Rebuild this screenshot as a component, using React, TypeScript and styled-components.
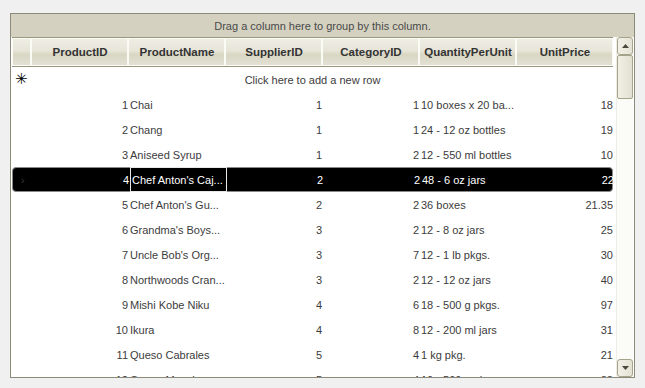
import * as React from 'react';
import styled, { createGlobalStyle } from 'styled-components';

const GlobalStyle = createGlobalStyle`
    html, body {
        margin: 0;
        padding: 0;
        background: #f0f0f0;
        font-family: 'Liberation Sans', Arial, sans-serif;
    }
`;

const COLS = '20px 97px 97px 97px 97px 97px 97px';

const Page = styled.div`
    padding: 13px 0 0 10px;
`;

const Grid = styled.div`
    width: 625px;
    height: 365px;
    box-sizing: border-box;
    border: 1px solid #8c8a78;
    background: #ffffff;
    display: flex;
    flex-direction: column;
`;

const GroupPanel = styled.div`
    height: 23px;
    flex: none;
    background: #d4d1c0;
    color: #4a4a4a;
    font-size: 11px;
    display: flex;
    align-items: center;
    justify-content: center;
`;

const Body = styled.div`
    flex: 1;
    display: flex;
    padding: 0 1px;
    gap: 3px;
    min-height: 0;
`;

const Table = styled.div`
    width: 602px;
    display: flex;
    flex-direction: column;
    overflow: hidden;
`;

const HeaderRow = styled.div`
    height: 30px;
    flex: none;
    box-sizing: border-box;
    display: grid;
    grid-template-columns: ${COLS};
    border-top: 1px solid #9a987e;
    border-bottom: 1px solid #9a987e;
    background: #9a987e;
`;

const HeaderCell = styled.div<{ first?: boolean }>`
    box-sizing: border-box;
    border: 1px solid #fbfbf6;
    border-left-width: ${(p) => (p.first ? '1px' : '0')};
    background: linear-gradient(#efeee5 0%, #e7e5d8 45%, #d9d6c4 60%, #e3e1d3 100%);
    color: #333333;
    font-weight: bold;
    font-size: 11.5px;
    display: flex;
    align-items: center;
    justify-content: center;
    box-shadow: inset -1px 0 0 #fbfbf6;
`;

const Rows = styled.div`
    display: flex;
    flex-direction: column;
`;

const Row = styled.div<{ selected?: boolean }>`
    height: 25px;
    flex: none;
    box-sizing: border-box;
    display: grid;
    grid-template-columns: ${COLS};
    align-items: stretch;
    font-size: 11px;
    color: ${(p) => (p.selected ? '#ffffff' : '#3c3c3c')};
    background: ${(p) => (p.selected ? '#000000' : 'transparent')};
    border: ${(p) => (p.selected ? '1px solid #8a8a8a' : '0')};
    border-radius: ${(p) => (p.selected ? '4px' : '0')};
`;

const NewRow = styled.div`
    height: 25px;
    flex: none;
    position: relative;
    display: flex;
    align-items: center;
    justify-content: center;
    font-size: 11px;
    color: #3c3c3c;
`;

const Star = styled.span`
    position: absolute;
    left: 3px;
    top: 5px;
    font-size: 15px;
    line-height: 15px;
    color: #000;
    font-family: 'DejaVu Sans', sans-serif;
`;

const Cell = styled.div<{ align?: 'left' | 'right'; focused?: boolean }>`
    box-sizing: border-box;
    display: flex;
    align-items: center;
    justify-content: ${(p) => (p.align === 'right' ? 'flex-end' : 'flex-start')};
    padding: 0 1px;
    white-space: nowrap;
    overflow: hidden;
    border: ${(p) => (p.focused ? '1px solid #e8e8e8' : '0')};
    margin-top: ${(p) => (p.focused ? '-1px' : '0')};
    margin-bottom: ${(p) => (p.focused ? '-1px' : '0')};
`;

const Indicator = styled.div`
    display: flex;
    align-items: center;
    padding-left: 8px;
    color: #3a3a3a;
    font-size: 11px;
`;

const ScrollBar = styled.div`
    width: 16px;
    flex: none;
    display: flex;
    flex-direction: column;
    background: #fbfbf8;
    border-left: 1px solid #eeeee6;
`;

const ScrollButton = styled.div`
    height: 18px;
    flex: none;
    box-sizing: border-box;
    border: 1px solid #a5a389;
    border-radius: 3px;
    background: linear-gradient(90deg, #f2f1e8, #e4e2d3);
    display: flex;
    align-items: center;
    justify-content: center;
`;

const Thumb = styled.div`
    height: 44px;
    flex: none;
    box-sizing: border-box;
    border: 1px solid #a5a389;
    border-radius: 2px;
    background: linear-gradient(90deg, #f1f0e6, #e2e0d0);
`;

const Track = styled.div`
    flex: 1;
`;

type Product = [number, string, number, number, string, string];

const data: Product[] = [
    [1, 'Chai', 1, 1, '10 boxes x 20 ba...', '18'],
    [2, 'Chang', 1, 1, '24 - 12 oz bottles', '19'],
    [3, 'Aniseed Syrup', 1, 2, '12 - 550 ml bottles', '10'],
    [4, "Chef Anton's Caj...", 2, 2, '48 - 6 oz jars', '22'],
    [5, "Chef Anton's Gu...", 2, 2, '36 boxes', '21.35'],
    [6, "Grandma's Boys...", 3, 2, '12 - 8 oz jars', '25'],
    [7, "Uncle Bob's Org...", 3, 7, '12 - 1 lb pkgs.', '30'],
    [8, 'Northwoods  Cran...', 3, 2, '12 - 12 oz jars', '40'],
    [9, 'Mishi Kobe Niku', 4, 6, '18 - 500 g pkgs.', '97'],
    [10, 'Ikura', 4, 8, '12 - 200 ml jars', '31'],
    [11, 'Queso Cabrales', 5, 4, '1 kg pkg.', '21'],
    [12, 'Queso Manchego...', 5, 4, '10 - 500 g pkgs.', '38'],
];

const columns = ['ProductID', 'ProductName', 'SupplierID', 'CategoryID', 'QuantityPerUnit', 'UnitPrice'];

const Arrow = ({ up }: { up?: boolean }) => (
    <svg width="7" height="4" viewBox="0 0 7 4">
        <path d={up ? 'M0 4 L3.5 0 L7 4 Z' : 'M0 0 L3.5 4 L7 0 Z'} fill="#4a4a3a" />
    </svg>
);

export default function App() {
    const selectedId = 4;
    return (
        <>
            <GlobalStyle />
            <Page>
                <Grid>
                    <GroupPanel>Drag a column here to group by this column.</GroupPanel>
                    <Body>
                        <Table>
                            <HeaderRow>
                                <HeaderCell first />
                                {columns.map((c) => (
                                    <HeaderCell key={c}>{c}</HeaderCell>
                                ))}
                            </HeaderRow>
                            <Rows>
                                <NewRow>
                                    <Star>✳</Star>
                                    Click here to add a new row
                                </NewRow>
                                {data.map(([id, name, sup, cat, qty, price]) => {
                                    const sel = id === selectedId;
                                    return (
                                        <Row key={id} selected={sel}>
                                            <Indicator>{sel ? '›' : ''}</Indicator>
                                            <Cell align="right">{id}</Cell>
                                            <Cell focused={sel}>{name}</Cell>
                                            <Cell align="right">{sup}</Cell>
                                            <Cell align="right">{cat}</Cell>
                                            <Cell>{qty}</Cell>
                                            <Cell align="right">{price}</Cell>
                                        </Row>
                                    );
                                })}
                            </Rows>
                        </Table>
                        <ScrollBar>
                            <ScrollButton>
                                <Arrow up />
                            </ScrollButton>
                            <Thumb />
                            <Track />
                            <ScrollButton>
                                <Arrow />
                            </ScrollButton>
                        </ScrollBar>
                    </Body>
                </Grid>
            </Page>
        </>
    );
}
